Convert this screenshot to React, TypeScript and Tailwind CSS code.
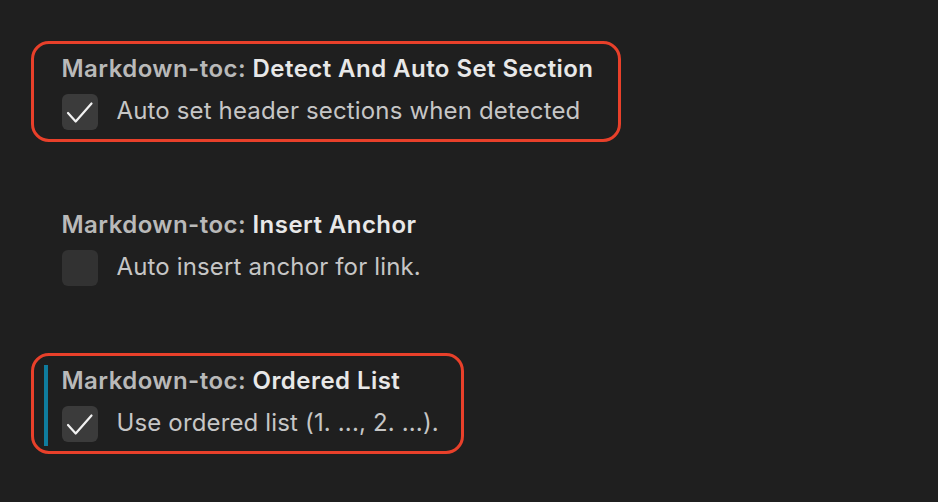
import React from "react";

type Item = {
  prefix: string;
  name: string;
  desc: string;
  checked: boolean;
  boxed: boolean;
  focused: boolean;
  width: string;
};

function Check() {
  return (
    <svg width="36" height="36" viewBox="0 0 36 36" fill="none">
      <polyline
        points="6,19 13.7,27.5 29.5,9.5"
        stroke="#f2f2f2"
        strokeWidth="2.2"
        strokeLinecap="round"
        strokeLinejoin="round"
      />
    </svg>
  );
}

function Setting({ item }: { item: Item }) {
  return (
    <div
      className={`ml-[31px] h-[101px] rounded-[18px] border-[3.5px] ${
        item.boxed ? "border-[#e8402a]" : "border-transparent"
      } ${item.width}`}
    >
      <div className="flex h-full pl-[9.5px] pt-[9px] pb-[5px]">
        <div className={`w-[4px] ${item.focused ? "bg-[#0f7c9e]" : "bg-transparent"}`} />
        <div className="flex flex-col pl-[14px]">
          <div className="text-[24px] leading-[32px] font-semibold tracking-[0.45px] whitespace-nowrap">
            <span className="text-[#b9b9b9]">{item.prefix} </span>
            <span className="text-[#e8e8e8]">{item.name}</span>
          </div>
          <div className="mt-[9px] flex items-center">
            <div
              className={`flex h-[36px] w-[36px] items-center justify-center rounded-[6px] ${
                item.checked ? "bg-[#3b3b3b]" : "bg-[#323232]"
              }`}
            >
              {item.checked && <Check />}
            </div>
            <span className="ml-[19px] -mt-[2px] text-[24px] leading-[32px] text-[#c6c6c6] whitespace-nowrap tracking-[0.15px]">
              {item.desc}
            </span>
          </div>
        </div>
      </div>
    </div>
  );
}

export default function App() {
  const items: Item[] = [
    {
      prefix: "Markdown-toc:",
      name: "Detect And Auto Set Section",
      desc: "Auto set header sections when detected",
      checked: true,
      boxed: true,
      focused: false,
      width: "w-[590px]",
    },
    {
      prefix: "Markdown-toc:",
      name: "Insert Anchor",
      desc: "Auto insert anchor for link.",
      checked: false,
      boxed: false,
      focused: false,
      width: "w-[590px]",
    },
    {
      prefix: "Markdown-toc:",
      name: "Ordered List",
      desc: "Use ordered list (1. ..., 2. ...).",
      checked: true,
      boxed: true,
      focused: true,
      width: "w-[433px]",
    },
  ];
  return (
    <div
      className="h-[502px] w-[938px] overflow-hidden bg-[#1f1f1f]"
      style={{ fontFamily: 'Inter, "Noto Sans", "Liberation Sans", sans-serif' }}
    >
      <div className="flex flex-col gap-[55px] pt-[41px]">
        {items.map((it) => (
          <Setting key={it.name} item={it} />
        ))}
      </div>
    </div>
  );
}
